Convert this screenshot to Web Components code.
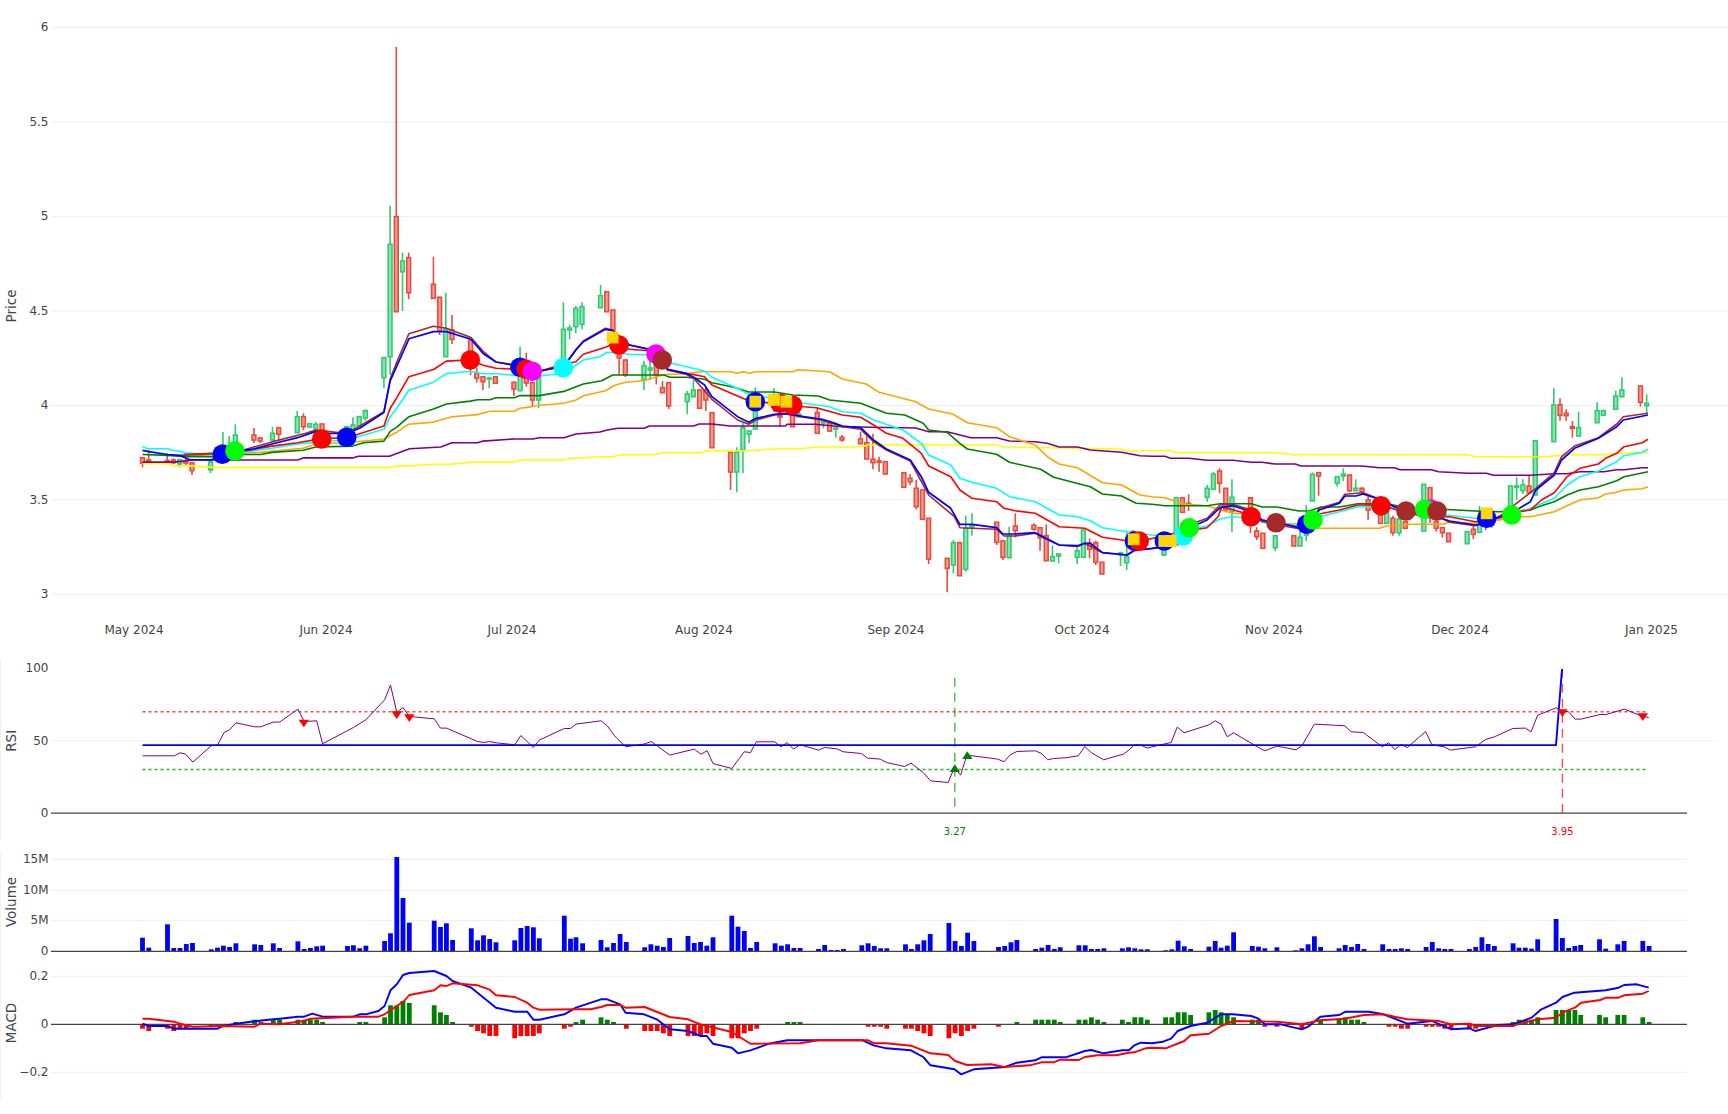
<!DOCTYPE html>
<html lang="en"><head><meta charset="utf-8"><title>Chart</title>
<style>html,body{margin:0;padding:0;background:#fff}</style></head>
<body>
<stock-dashboard>
<chart-panel kind="price"></chart-panel>
<chart-panel kind="rsi"></chart-panel>
<chart-panel kind="volume"></chart-panel>
<chart-panel kind="macd"></chart-panel>
</stock-dashboard>
<script>
const X=x=>x/2.722;
const Z=[(x,y)=>[X(x),y/2.376],(x,y)=>[576+X(x),260+y/3],(x,y)=>[1152+X(x),360+y/3]];
const L=[(x,y)=>[X(x),650+y/3],(x,y)=>[576+X(x),650+y/3],(x,y)=>[1152+X(x),650+y/3]];
function pts(parts,map){let o=[];parts.forEach((a,i)=>{for(let k=0;k<a.length;k+=2){o.push(map[i](a[k],a[k+1]).map(v=>v.toFixed(1)).join(','))}});return o.join(' ')}
const LINES={
yellow:[[388,1102,460,1102,475,1107,510,1107,600,1111,1060,1111,1080,1107,1115,1107,1180,1103,1230,1103,1280,1098,1400,1098,1415,1093,1535,1093,1550,1089],[0,595,65,590,100,590,120,584,215,584,235,578,340,578,355,572,470,572,540,567,605,567,655,561,775,561,795,555,1145,555,1165,561,1480,567,1500,573],[0,272,50,272,65,278,330,278,390,284,860,284,880,290,1070,290,1130,284,1230,284,1285,278,1350,278]],
purple:[[388,1098,475,1098,505,1095,520,1093,810,1093,825,1088,960,1088,975,1084,1060,1084,1115,1066,1200,1062,1230,1052,1300,1052,1315,1048,1400,1043,1450,1043,1468,1040,1535,1040],[0,522,65,516,85,510,115,505,185,505,200,498,320,498,335,492,370,492,420,498,570,498,575,493,650,493,725,500,925,504,960,515,1010,515,1045,525,1075,533,1145,533,1180,543,1250,545,1283,550,1315,561,1365,561,1400,570,1485,577,1535,587],[0,289,35,289,50,295,100,295,150,301,220,301,270,307,300,307,335,312,390,312,405,318,570,318,620,323,660,323,675,329,760,329,780,335,860,340,910,340,930,346,1030,346,1095,341,1130,341,1165,335,1230,335,1265,329,1285,329,1335,323,1350,323]],
orange:[[510,1080,575,1085,640,1077,710,1075,825,1065,860,1055,940,1052,1000,1047,1045,1043,1080,1027,1113,1008,1180,1003,1230,990,1300,985,1333,977,1400,977,1415,970,1435,968,1468,963,1535,958],[0,420,20,407,80,392,105,376,135,367,185,362,225,348,250,343,300,342,335,335,420,335,437,340,455,335,472,340,490,335,590,335,605,329,690,335,725,357,790,372,825,397,925,425,960,447,1025,462,1065,488,1145,503,1180,530,1250,555,1283,590,1315,612,1365,623,1433,668,1485,675,1535,705],[0,410,35,413,85,432,150,437,185,450,220,460,250,463,300,485,360,490,420,495,455,505,620,505,640,497,680,497,700,493,790,493,810,487,880,490,945,480,1000,470,1030,470,1095,455,1130,437,1165,420,1215,413,1235,402,1265,397,1285,390,1335,386,1350,380]],
green:[[388,1080,456,1082,505,1085,575,1085,640,1080,710,1080,740,1075,825,1070,860,1062,960,1060,990,1052,1045,1048,1062,1025,1080,1015,1113,990,1180,972,1215,960,1280,953,1300,950,1333,950,1350,945,1400,945,1415,940,1468,940,1535,930],[0,380,20,372,70,362,100,345,240,345,255,352,300,352,350,358,370,368,430,382,470,396,540,396,590,405,660,408,690,420,775,430,845,460,895,465,945,490,960,510,1010,517,1045,550,1065,567,1145,583,1180,607,1265,628,1300,652,1400,680,1433,702,1485,708,1525,730],[0,433,35,437,150,437,185,431,270,431,300,441,340,441,400,453,430,452,460,441,510,441,560,431,640,431,700,445,790,448,880,453,945,455,1030,450,1060,437,1095,425,1130,405,1165,390,1215,380,1265,362,1285,350,1350,335]],
cyan:[[388,1062,405,1066,456,1066,470,1070,490,1072,505,1076,575,1080,640,1077,740,1065,810,1055,875,1050,945,1045,1045,1020,1062,990,1080,970,1113,927,1180,908,1215,888,1280,882,1315,888,1350,888,1415,893,1450,895,1535,887],[0,315,20,300,65,290,85,277,145,283,200,285,260,310,350,333,370,352,430,380,470,403,620,430,690,440,725,455,775,460,810,480,890,510,940,550,960,585,1020,615,1045,655,1078,667,1145,685,1180,710,1250,725,1315,765,1365,770,1400,782,1433,803,1500,815],[0,525,60,530,100,510,150,498,185,477,220,470,270,475,300,485,370,492,420,500,455,470,510,455,560,440,625,440,700,450,800,465,880,475,945,470,1000,455,1030,445,1095,415,1130,375,1165,350,1215,333,1265,305,1285,287,1335,277,1350,268]],
red:[[500,1080,640,1075,740,1060,810,1052,875,1042,945,1040,1045,1012,1062,970,1080,945,1113,895,1180,878,1215,858,1280,855,1315,868,1350,875,1415,878,1450,887,1535,865],[0,305,20,283,80,262,100,252,145,268,200,272,250,330,300,340,350,350,370,375,440,408,470,422,620,440,655,443,725,465,775,472,810,495,845,520,890,535,940,580,960,618,1020,650,1045,690,1078,715,1145,725,1165,745,1195,752,1250,760,1315,800,1385,805,1433,832,1500,842,1530,845],[60,520,100,512,150,503,180,470,190,440,270,465,300,480,370,495,420,505,455,462,510,450,560,435,625,435,700,462,760,470,810,470,880,485,945,475,1000,455,1030,450,1060,420,1095,398,1130,350,1165,325,1215,312,1235,295,1265,280,1285,260,1335,248,1350,238]],
brown:[[490,1082,640,1075,740,1050,830,1030,860,1022,945,1030,1045,978,1062,900,1080,860,1113,793,1180,775,1215,780,1282,802,1315,835,1350,860,1415,870,1450,885,1535,870],[0,268,20,243,80,205,100,210,145,255,200,268,250,330,300,343,320,355,370,418,440,480,470,493,490,480,540,465,570,462,620,472,670,480,705,493,725,500,775,508,810,545,845,570,910,603,960,705,1030,770,1045,803,1145,808,1165,828,1195,828,1250,820,1280,838,1315,855,1365,860,1385,850,1433,878,1500,885,1520,872],[30,562,60,540,100,495,150,475,185,435,220,433,270,450,300,485,370,500,420,510,455,445,510,427,525,403,575,398,625,420,660,440,700,458,780,470,810,487,880,497,945,470,1045,385,1095,338,1115,290,1150,258,1215,233,1265,192,1283,170,1350,160]],
blue:[[388,1070,405,1073,456,1080,490,1082,515,1092,575,1093,605,1080,640,1072,690,1067,740,1055,810,1040,860,1025,878,1030,945,1030,980,1017,1045,980,1062,905,1080,870,1113,805,1180,788,1215,788,1282,806,1315,840,1350,860,1415,870,1450,885,1535,870],[0,270,20,245,80,208,100,212,145,255,200,268,250,328,300,340,320,352,350,375,370,410,440,470,470,487,490,475,540,463,570,460,620,470,670,478,705,490,725,498,775,503,810,540,845,567,910,600,940,650,960,697,1020,745,1045,793,1078,793,1145,803,1162,822,1195,822,1250,818,1280,835,1315,855,1365,857,1385,850,1400,850,1433,878,1500,885,1520,870],[0,565,30,560,60,540,100,505,150,480,185,443,220,437,270,455,300,480,370,495,420,510,455,450,510,430,525,408,555,408,575,402,625,420,660,440,700,455,775,470,810,483,880,495,910,490,945,470,980,460,1000,445,1030,425,1045,390,1095,345,1115,300,1150,265,1215,235,1265,200,1283,180,1350,165]]
};
const LW={yellow:1.6,purple:1.6,orange:1.6,green:1.6,cyan:1.6,red:1.6,brown:1.6,blue:1.7};
const LC={yellow:'#ff0',purple:'#800080',orange:'#ffa500',green:'#008000',cyan:'#0ff',red:'#f00',brown:'#a52a2a',blue:'#00f'};
/* d, colour, high, bodyTop, bodyBottom, low */
const CANDLES=[
[0,'r',457.7,457.7,463.3,467.3],[1,'r',450,460,462,463.5],[4,'r',453.3,460.7,462.3,463.3],[5,'r',458.3,460,462.7,464],[6,'g',459.7,459.7,464,467.3],[7,'r',458.3,461,463,465],[8,'r',462,462.7,470.7,475],[11,'g',459,462,470,473],[13,'g',432,445,460,460],[14,'g',436,446,458,458],[15,'g',424.3,435,445,452],[18,'r',428,435,440,443],[19,'r',437,438,441,443],[21,'g',426.7,433.3,440,440],[22,'r',427.7,427.7,434.3,440],[25,'g',411,416.7,432.7,432.7],[26,'r',413.3,416.7,426.7,430],[27,'g',423.7,423.7,427,427],[28,'g',421.7,424.3,429,429],[29,'r',424,424,432,436],[33,'g',426.7,426.7,440,444],[34,'g',417.3,425,429,429.3],[35,'g',416.7,416.7,426,426],[36,'g',409.3,410.7,418,420.7],[39,'g',357.7,357.7,377.7,388.3],[40,'g',205.7,244.3,356.7,375],[41,'r',47,216.7,311.7,311.7],[42,'g',252.7,261,271.7,311],[43,'r',252.7,257.7,292.7,299.3],[47,'r',256.7,284.3,298.3,298.3],[48,'r',296.7,297.3,331,335],[49,'g',292.7,329.3,356.7,356.7],[50,'r',315,330,339.3,344],[53,'r',340,340,352,375],[54,'r',368,373.3,378.3,382.7],[55,'r',376.7,376.7,381.7,390],[56,'g',376.7,378,379,388.3],[57,'r',376.7,376.7,383.3,383.3],[60,'r',381.7,382.3,389,396],[61,'g',346.7,370,390.7,390.7],[62,'r',353,363,383,386.7],[63,'r',382,382.7,400,406.7],[64,'g',376.7,376.7,400,408.3],[68,'g',302.3,329.3,360,360],[69,'g',325,328,330,339.3],[70,'g',306,308.3,326.7,333.3],[71,'g',302.3,306.7,324.3,329.3],[74,'g',285,295.7,307.7,307.7],[75,'r',291.7,291.7,311.7,311.7],[76,'r',310,310,330,330],[77,'r',345,355,358,375],[78,'r',360,360,375,377],[81,'g',360.7,365.7,380,390],[82,'g',356,368,370,380],[83,'r',360,363,375,384.3],[84,'r',381,387.7,392.7,392.7],[85,'r',382.7,382.7,406,409],[88,'g',391,394,401.7,414.3],[89,'g',380,390,396.7,396.7],[90,'r',390,390,408.3,408.3],[91,'r',386,390,400,411],[92,'r',412.7,412.7,447.7,447.7],[95,'r',452,452.3,472,490],[96,'g',447.3,452.3,472,492.3],[97,'g',423,427.7,450,473.3],[98,'g',431,431,434.3,443.3],[99,'g',387.3,410,429,429],[102,'g',388,395,405,412],[103,'r',410,415,417,427],[105,'r',405,413,426.7,426.7],[106,'g',410,414,416.7,416.7],[109,'r',407.7,412.7,433.3,433.3],[110,'g',420,421,423,428.3],[111,'r',420.7,422.7,431,431.7],[112,'g',427.3,428,429,437.7],[113,'r',435,437.3,440,441.7],[116,'r',431.7,439,443.7,443.7],[117,'r',435,442.7,459,459],[118,'r',434,459.3,462.7,469.3],[119,'r',456.7,461,462.3,471.7],[120,'r',461.7,461.7,474,474],[123,'r',472.7,472.7,487.3,487.3],[124,'r',474,478.3,481.7,485],[125,'r',480,488.3,506.7,509.3],[126,'r',490,490,519.3,519.3],[127,'r',518.3,518.3,559,564],[130,'r',558.3,558.3,568.3,592.3],[131,'g',540,542.7,565,573.3],[132,'r',542.7,542.7,575.7,575.7],[133,'g',515.7,528.3,569.3,571.7],[134,'g',513.3,525,527,535.7],[138,'r',522.3,522.3,542.3,545],[139,'r',541,541,557.3,560],[140,'g',526.7,535.7,557.7,557.7],[141,'r',513.3,526,530.7,537.3],[144,'r',523.3,525.3,529.3,530.7],[145,'r',527.7,527.7,537.7,550.7],[146,'r',524.3,535.7,560.7,560.7],[147,'g',545.7,556.7,561,561],[148,'g',553.3,554,556,563.3],[151,'g',548,550.7,557.3,564],[152,'g',530,530,557.3,557.3],[153,'r',538.3,543.3,549.3,558.3],[154,'r',540.7,542.7,562.3,565],[155,'r',562.3,562.3,574,574],[158,'g',551.7,553,555,566],[159,'g',530.7,556.7,562.7,570],[160,'r',530,532,545,552],[165,'g',545,545,555,556],[167,'g',497.7,497.7,545,545],[168,'r',497.7,497.7,512.3,512.3],[169,'r',494.3,503.3,505,511],[172,'g',485,488.3,497.3,501.7],[173,'g',471.7,474,489.3,489.3],[174,'r',468.3,471,483.3,493.3],[175,'r',488.3,488.3,510,510],[176,'g',479.3,497.3,511.7,531.7],[179,'r',497.7,497.7,512,533],[180,'r',527.3,531,536.7,540],[181,'r',533.3,533.3,548.3,548.3],[183,'g',535.7,535.7,547.7,551],[186,'r',535.7,535.7,546,546],[187,'g',531.7,537.3,546,546],[188,'g',505,520,535,541],[189,'g',472.3,474.3,501,501],[190,'r',472.7,472.7,476,495.7],[193,'g',476,476.7,483.3,486.7],[194,'g',468.3,474,476,481],[195,'r',475,475,490.7,492.3],[196,'g',479.3,488.3,490.7,490.7],[197,'r',487.3,488.3,491.7,494],[198,'r',495,500,510,520],[200,'r',515,515,523.3,523.3],[201,'g',505,511.7,523.3,523.3],[202,'r',515.7,518.3,532.7,535.7],[203,'g',515.7,519,532.7,535.7],[204,'r',521.7,521.7,528.3,528.3],[207,'g',484.3,484.3,531,531],[208,'r',487.7,487.7,501.7,523],[209,'r',518,521.7,528.3,531.7],[210,'r',527.7,527.7,532.7,537.7],[211,'r',533.3,533.3,541.7,541.7],[214,'g',531.7,531.7,543.7,543.7],[215,'r',525,529.3,534.3,539.3],[216,'g',506,523.3,532.3,532.3],[217,'r',515,518,524,530],[218,'g',509.3,515,525,528],[221,'g',486,486,506.7,506.7],[222,'g',477.3,486,487.3,500],[223,'g',479.3,485,490.7,494],[224,'r',476,486,492.7,492.7],[225,'g',440.7,440.7,495,495],[228,'g',388.3,405,441.7,441.7],[229,'r',398.3,404.7,415.3,420.7],[230,'r',409.3,413.3,415.7,420.7],[231,'r',421,426.7,428.3,437.7],[232,'g',411.7,427.7,436,436],[235,'g',402.3,410.7,422.7,422.7],[236,'g',409.7,410.7,415.3,415.3],[238,'g',390.7,396,409.3,409.3],[239,'g',377.3,390,396.7,396.7],[242,'r',386,386,402.3,406.7],[243,'g',394.3,403.3,405.7,413.3]];
/* x, y, colour in paint order */
const DOTS=[[222.3,454.3,'#00f'],[235,451,'#0f0'],[321.7,439,'#f00'],[346.7,437.3,'#00f'],[470.3,360,'#f00'],[520,367.3,'#00f'],[526,369.3,'#f00'],[532.3,371.3,'#f0f'],[563.3,367.7,'#0ff'],[619,345,'#f00'],[656,354,'#f0f'],[662.3,360,'#a52a2a'],[755.3,401.7,'#00f'],[780,403.3,'#f00'],[792.7,405.3,'#f00'],[1134.4,541,'#00f'],[1139.2,541,'#f00'],[1164.3,541,'#00f'],[1183.3,536,'#0ff'],[1189.3,527.7,'#0f0'],[1251,516.7,'#f00'],[1276,522.7,'#a52a2a'],[1306.7,524.3,'#00f'],[1313,520,'#0f0'],[1381,505.7,'#f00'],[1406,511,'#a52a2a'],[1430.7,509,'#f0f'],[1424.7,509.3,'#0f0'],[1437,511,'#a52a2a'],[1486.7,518.3,'#00f'],[1511.7,515,'#0f0']];
const SQUARES=[[612.7,337.5],[755.3,401.7],[774,400],[786.3,401.7],[1133.7,539.3],[1164.3,541],[1170.6,541],[1486.7,513.3]];
const VOL=[[388,860,405,890,456,820,473,891,490,891,507,879,524,876,575,895,592,890,608,884,625,888,642,877,693,880,710,882,744,877,761,891,811,871,828,894,845,891,862,886,878,884,946,885,962,883,979,892,996,884,1047,870,1063,847,1080,618,1097,741,1114,815,1182,809,1199,828,1215,817,1232,867,1283,832,1300,868,1316,853,1333,864,1350,874,1401,868,1418,831,1435,825,1452,829,1468,862,1536,794,1553,863],
[0,859,18,877,68,867,85,889,102,876,120,849,137,873,187,889,204,880,221,884,238,888,255,861,305,855,322,876,339,873,356,884,373,859,424,794,441,827,458,840,475,891,492,873,542,877,559,884,576,880,593,891,610,891,660,894,677,882,694,897,711,897,728,894,778,883,795,877,812,885,829,892,846,892,897,880,913,894,930,880,947,868,964,849,1015,816,1032,870,1049,885,1066,845,1083,870,1150,888,1167,885,1184,874,1200,867,1251,894,1268,890,1285,882,1302,894,1318,889,1369,883,1386,883,1403,894,1420,894,1437,892,1487,892,1504,889,1521,892,1538,895,1555,895],
[37,898,54,895,71,869,88,886,105,894,155,887,172,870,188,890,205,884,222,844,273,885,290,887,307,892,340,889,391,898,408,892,425,880,442,856,459,888,509,892,526,882,543,888,560,879,577,894,628,880,645,894,662,894,679,892,696,894,746,888,763,873,780,892,797,894,814,894,864,894,881,888,898,859,915,879,932,885,983,877,999,890,1016,890,1033,893,1050,865,1100,804,1117,861,1134,891,1151,885,1167,882,1218,865,1235,893,1268,880,1285,870,1336,870,1353,885]];
const HIST=[[388,1133,405,1140,456,1133,473,1140,490,1133,507,1133,575,1127,592,1127,608,1127,625,1127,642,1113,693,1106,710,1113,744,1106,761,1106,811,1106,828,1106,845,1106,862,1106,878,1113,979,1113,996,1113,1047,1099,1063,1063,1080,1063,1097,1050,1114,1056,1182,1063,1199,1084,1215,1092,1232,1113,1283,1127,1300,1140,1316,1147,1333,1155,1350,1155,1401,1162,1418,1155,1435,1155,1452,1155,1468,1147,1536,1133,1553,1127],
[0,1113,18,1106,68,1099,85,1106,102,1113,137,1133,187,1140,204,1140,221,1140,238,1147,255,1155,305,1155,322,1155,339,1155,356,1147,373,1155,424,1162,441,1162,458,1147,475,1140,492,1133,576,1113,593,1113,610,1113,795,1127,812,1127,829,1127,846,1133,897,1133,913,1133,930,1140,947,1147,964,1155,1015,1162,1032,1147,1049,1155,1066,1140,1083,1133,1150,1127,1200,1113,1251,1106,1268,1106,1285,1106,1302,1106,1318,1113,1369,1106,1386,1106,1403,1099,1420,1106,1437,1113,1487,1106,1504,1113,1521,1099,1538,1099,1555,1106],
[37,1099,54,1099,71,1084,88,1084,105,1092,155,1084,172,1077,188,1084,205,1092,222,1099,273,1106,290,1106,307,1127,340,1127,408,1133,459,1106,509,1106,526,1099,543,1106,560,1106,577,1113,645,1127,662,1127,679,1133,696,1133,746,1127,763,1127,780,1127,797,1133,814,1133,864,1133,881,1133,898,1127,915,1127,983,1113,999,1106,1016,1106,1033,1106,1050,1099,1100,1077,1117,1077,1134,1077,1151,1077,1167,1092,1218,1092,1235,1099,1268,1092,1285,1092,1336,1099,1353,1113]];
const RSI=[[388,315,475,315,490,306,505,310,525,334,575,285,592,283,610,245,625,237,642,216,693,228,710,228,744,214,761,214,811,175,828,212,862,210,878,279,962,230,996,207,1047,147,1063,103,1080,185,1097,170,1114,197,1182,204,1199,232,1215,232,1300,272,1316,275,1333,272,1350,276,1401,282,1418,254,1452,290,1468,268,1536,233,1553,233],
[0,220,68,210,85,225,105,255,135,288,185,280,205,272,255,313,322,295,340,310,357,300,373,338,424,353,458,303,475,305,491,273,541,273,558,288,575,275,592,295,610,282,660,298,677,290,710,294,727,303,777,308,794,322,828,325,845,335,895,347,912,337,945,365,965,390,1013,395,1030,350,1047,373,1064,313,1148,325,1165,333,1182,312,1200,302,1250,300,1267,308,1284,327,1300,323,1333,321,1367,315,1385,287,1402,305,1436,327,1490,310,1505,298,1520,282,1537,283,1555,292],
[0,288,52,275,69,229,87,246,155,222,172,210,188,220,205,258,222,246,290,290,307,300,340,286,392,297,408,285,442,220,525,225,542,243,575,245,627,288,644,276,661,296,678,281,695,290,745,242,762,282,795,288,812,298,880,288,908,266,932,258,982,233,1016,232,1032,243,1050,193,1066,186,1100,171,1117,180,1133,182,1152,205,1168,205,1220,191,1236,191,1286,175,1336,197,1352,200]];
const MACD_B=[[388,1118,405,1125,456,1125,473,1133,575,1133,592,1133,608,1125,642,1118,693,1111,744,1105,761,1103,811,1097,828,1097,850,1088,878,1097,962,1097,979,1090,996,1090,1030,1080,1047,1065,1063,1018,1080,1000,1097,972,1114,966,1182,960,1215,975,1232,990,1283,1010,1350,1070,1401,1082,1435,1082,1452,1106,1468,1106,1536,1090],
[0,1070,68,1045,85,1045,120,1060,135,1085,185,1090,220,1105,255,1135,305,1140,339,1155,356,1155,373,1178,424,1190,441,1207,475,1198,525,1178,575,1168,780,1168,810,1183,845,1192,912,1198,945,1218,965,1243,1030,1255,1048,1270,1083,1255,1168,1248,1200,1235,1250,1228,1267,1219,1333,1219,1385,1200,1402,1197,1436,1207,1487,1198,1505,1198,1520,1183,1537,1175],
[0,1177,30,1172,52,1163,70,1140,105,1125,150,1115,188,1090,220,1090,270,1095,290,1103,307,1120,350,1120,408,1135,425,1127,458,1097,510,1092,527,1082,590,1082,630,1090,695,1118,762,1110,815,1135,865,1132,880,1140,915,1130,945,1122,983,1120,1033,1100,1060,1075,1100,1055,1117,1038,1150,1025,1235,1018,1270,1010,1285,1002,1320,1000,1352,1010]];
const MACD_R=[[388,1103,405,1103,473,1112,490,1118,525,1127,605,1125,693,1127,710,1118,760,1120,828,1110,845,1103,962,1097,1030,1097,1047,1090,1063,1078,1100,1050,1114,1032,1182,1018,1199,1003,1215,1005,1232,997,1300,1003,1333,1016,1350,1033,1401,1038,1435,1055,1452,1070,1468,1076],
[0,1075,40,1075,68,1068,85,1062,120,1062,135,1070,187,1068,255,1098,305,1105,339,1120,424,1143,441,1155,475,1178,610,1177,660,1168,795,1168,812,1177,845,1177,912,1184,965,1207,1013,1212,1032,1230,1064,1242,1130,1240,1165,1248,1235,1243,1267,1234,1300,1234,1318,1226,1369,1227,1385,1218,1420,1213,1470,1213,1505,1205,1520,1204,1550,1192],
[0,1190,37,1192,88,1170,105,1153,155,1148,188,1125,222,1110,340,1112,408,1120,458,1108,525,1103,577,1092,630,1090,660,1097,695,1105,780,1110,815,1120,865,1118,882,1125,983,1125,1000,1118,1050,1105,1100,1100,1117,1085,1151,1070,1168,1055,1220,1047,1236,1040,1270,1040,1285,1033,1336,1028,1352,1020]];

const tick=(x,y,t)=>`<text class="tick" x="${x}" y="${y}" text-anchor="end" dominant-baseline="central">${t}</text>`;
const title=(y,t)=>`<text class="title" transform="translate(10.5,${y}) rotate(-90)" text-anchor="middle" dominant-baseline="central">${t}</text>`;
const hline=(y,x1,x2,c='#eee',w=1)=>`<line x1="${x1}" x2="${x2}" y1="${y}" y2="${y}" stroke="${c}" stroke-width="${w}"/>`;
const poly=(p,c,w)=>`<polyline points="${p}" fill="none" stroke="${c}" stroke-width="${w}" stroke-linejoin="round"/>`;
function price(){
  let s='';
  [['6',27.4],['5.5',121.9],['5',216.4],['4.5',310.9],['4',405.4],['3.5',499.8],['3',594.3]].forEach(([t,y])=>{s+=hline(y,51,1728)+tick(48.5,y,t)});
  [['May 2024',134],['Jun 2024',326],['Jul 2024',512],['Aug 2024',704],['Sep 2024',896],['Oct 2024',1082],['Nov 2024',1274],['Dec 2024',1460],['Jan 2025',1651.5]].forEach(([t,x])=>{s+=`<text class="tick" x="${x}" y="630" text-anchor="middle" dominant-baseline="central">${t}</text>`});
  s+=title(306,'Price');
  CANDLES.forEach(([d,c,h,t,b,l])=>{const x=142.5+6.19*d,col=c=='g'?'#2ecc71':'#e74c3c';
    s+=`<line x1="${x}" x2="${x}" y1="${h}" y2="${t}" stroke="${col}" stroke-width="1.6"/><line x1="${x}" x2="${x}" y1="${b}" y2="${l}" stroke="${col}" stroke-width="1.6"/><rect x="${x-1.9}" y="${t}" width="3.8" height="${Math.max(b-t,1)}" fill="${col}" fill-opacity=".55" stroke="${col}" stroke-width="1.6"/>`});
  Object.keys(LINES).forEach(k=>{s+=poly(pts(LINES[k],Z),LC[k],LW[k])});
  DOTS.forEach(([x,y,c])=>{s+=`<circle cx="${x}" cy="${y}" r="9.8" fill="${c}"/>`});
  SQUARES.forEach(([x,y])=>{s+=`<rect x="${x-5.9}" y="${y-5.9}" width="11.8" height="11.8" fill="#ffd700"/>`});
  return s;
}
function rsi(){
  let s=`<line x1="0.5" x2="0.5" y1="658" y2="840" stroke="#f6f0f0"/>`;
  s+=hline(740,51,1718)+hline(812.3,51,1687,'#444',1.2);
  s+=tick(48.5,667.5,'100')+tick(48.5,740,'50')+tick(48.5,812,'0')+title(740,'RSI');
  s+=`<line x1="142.5" x2="1646" y1="711" y2="711" stroke="#f33" stroke-opacity=".9" stroke-width="1.4" stroke-dasharray="3 3"/><line x1="142.5" x2="1646" y1="768.7" y2="768.7" stroke="#0a0" stroke-opacity=".85" stroke-width="1.4" stroke-dasharray="3 3"/>`;
  s+=`<line x1="954.8" x2="954.8" y1="677" y2="812" stroke="#008000" stroke-opacity=".65" stroke-width="1.4" stroke-dasharray="9 6"/><line x1="1562.4" x2="1562.4" y1="668" y2="812" stroke="#f00" stroke-opacity=".7" stroke-width="1.4" stroke-dasharray="9 6"/>`;
  s+=poly(pts(RSI,L),'#800080',1)+poly('142.5,744.3 1556,744.3 1562,668.3','#00f',1.9);
  [[303.8,722.7],[396.7,714.3],[409.3,717.3],[1562.4,712.3],[1642.8,716.3]].forEach(([x,y])=>{s+=`<polygon points="${x-5.2},${y-3.8} ${x+5.2},${y-3.8} ${x},${y+3.8}" fill="#f00"/>`});
  [[954.8,767.3],[967.3,754.3]].forEach(([x,y])=>{s+=`<polygon points="${x-5.2},${y+3.8} ${x+5.2},${y+3.8} ${x},${y-3.8}" fill="#008000"/>`});
  s+=`<text class="note" x="954.8" y="830.7" fill="#008000" text-anchor="middle" dominant-baseline="central">3.27</text><text class="note" x="1562.4" y="830.7" fill="#f00" text-anchor="middle" dominant-baseline="central">3.95</text>`;
  return s;
}
function volume(){
  let s=`<line x1="0.5" x2="0.5" y1="852" y2="960" stroke="#f6f0f0"/>`;
  [['15M',858.3],['10M',889.3],['5M',919.3]].forEach(([t,y])=>{s+=hline(y,51,1687)+tick(48.5,y,t)});
  s+=tick(48.5,950,'0')+title(901,'Volume');
  VOL.forEach((a,i)=>{for(let k=0;k<a.length;k+=2){const [x,y]=L[i](a[k],a[k+1]);s+=`<rect x="${(x-2.4).toFixed(1)}" y="${y.toFixed(1)}" width="4.8" height="${(950.3-y).toFixed(1)}" fill="#00f"/>`}});
  s+=hline(950.3,51,1687,'#444',1.2);
  return s;
}
function macd(){
  let s=`<line x1="0.5" x2="0.5" y1="960" y2="1098" stroke="#f6f0f0"/>`;
  s+=hline(975.3,51,1687)+hline(1071.3,51,1687);
  s+=tick(48.5,975.3,'0.2')+tick(48.5,1023,'0')+tick(48.5,1071,'−0.2')+title(1022,'MACD');
  HIST.forEach((a,i)=>{for(let k=0;k<a.length;k+=2){const [x,y]=L[i](a[k],a[k+1]);const up=y<1023.3;s+=`<rect x="${(x-2.4).toFixed(1)}" y="${(up?y:1023.3).toFixed(1)}" width="4.8" height="${Math.abs(1023.3-y).toFixed(1)}" fill="${up?'#008000':'#f00'}"/>`}});
  s+=hline(1023.3,51,1687,'#444',1.2);
  s+=poly(pts(MACD_B,L),'#00f',1.9)+poly(pts(MACD_R,L),'#f00',1.9);
  return s;
}
/* panel: first page row, height, offset of the drawing inside the panel, painter */
const PANELS={price:[0,655,0,price],rsi:[655,190,.8,rsi],volume:[845,115,1,volume],macd:[960,154,1,macd]};
class ChartPanel extends HTMLElement{
  connectedCallback(){
    if(this.shadowRoot)return;
    const [top,h,off,fn]=PANELS[this.getAttribute('kind')];
    const r=this.attachShadow({mode:'open'});
    r.innerHTML=`<style>
:host{display:block;width:1728px;height:${h}px;overflow:visible}
svg{display:block;overflow:visible}
text{font-family:"DejaVu Sans",Verdana,sans-serif}
.tick{font-size:12px;fill:#444}
.title{font-size:13.5px;fill:#444}
.note{font-size:10px}
</style><svg xmlns="http://www.w3.org/2000/svg" width="1728" height="${h}" viewBox="0 ${top-off} 1728 ${h}">${fn()}</svg>`;
  }
}
class StockDashboard extends HTMLElement{
  constructor(){super();this.attachShadow({mode:'open'}).innerHTML=`<style>:host{display:flex;flex-direction:column;width:1728px;height:1114px;background:#fff;overflow:hidden}</style><slot></slot>`}
}
customElements.define('chart-panel',ChartPanel);
customElements.define('stock-dashboard',StockDashboard);
</script>
</body></html>
